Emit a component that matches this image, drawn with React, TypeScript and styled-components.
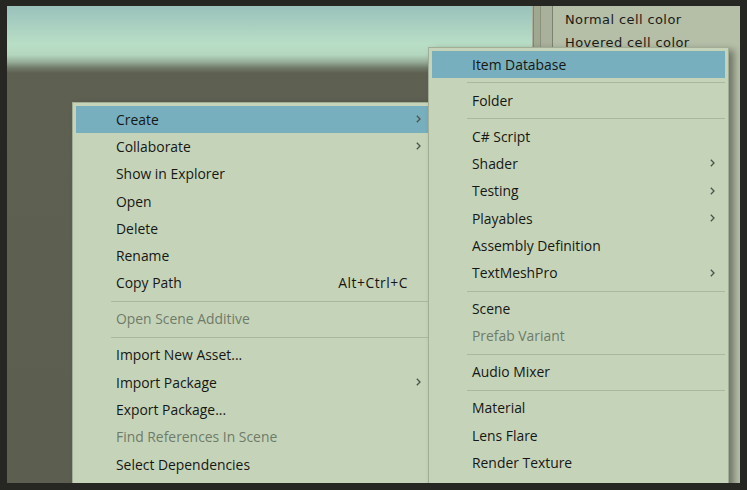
import React from "react";
import styled, { createGlobalStyle } from "styled-components";

const Global = createGlobalStyle`
  html, body { margin: 0; padding: 0; background: #262722; }
  body { width: 747px; height: 490px; overflow: hidden; }
`;

const Frame = styled.div`
  width: 747px;
  height: 490px;
  box-sizing: border-box;
  padding: 6px 7px 7px 7px;
  background: #262722;
`;

const Workspace = styled.div`
  position: relative;
  display: flex;
  height: 100%;
  overflow: hidden;
`;

const SceneView = styled.div`
  flex: 1;
  background: linear-gradient(
    to bottom,
    #9bc2bb 0px,
    #a6cdbf 16px,
    #b9dec6 38px,
    #b3d6be 49px,
    #97ad98 56px,
    #707a69 62px,
    #5e6152 67px,
    #5c5e50 100%
  );
`;

const Splitter = styled.div`
  width: 20px;
  display: flex;
  background: #a9b09b;
`;

const ScrollTrack = styled.div`
  width: 6px;
  margin-left: 1px;
  background: #a0a892;
  border-left: 1px solid #7f8772;
  border-right: 1px solid #8a927c;
`;

const Inspector = styled.div`
  width: 188px;
  border-left: 1px solid #7c8270;
  background: #b5bea7;
  padding-top: 2px;
  box-sizing: border-box;
`;

const FieldRow = styled.div`
  height: 23px;
  display: flex;
  align-items: center;
  padding-left: 12px;
  font-family: "DejaVu Sans", sans-serif;
  font-size: 13px;
  letter-spacing: 0.4px;
  color: #1a1c18;
`;

const Menu = styled.div<{ $left: number; $top: number; $width: number; $z: number }>`
  position: absolute;
  left: ${(p) => p.$left}px;
  top: ${(p) => p.$top}px;
  width: ${(p) => p.$width}px;
  z-index: ${(p) => p.$z};
  box-sizing: border-box;
  border: 1px solid #a2ad95;
  padding: 3px 3px 12px 3px;
  background: #c5d4b9;
  box-shadow: 5px 3px 7px rgba(0, 0, 0, 0.38);
  font-family: "Open Sans", sans-serif;
  font-size: 13.9px;
`;

const Item = styled.div<{ $active?: boolean; $disabled?: boolean }>`
  height: 27.3px;
  box-sizing: border-box;
  padding-bottom: 1px;
  display: flex;
  align-items: center;
  padding-left: 40px;
  background: ${(p) => (p.$active ? "#77afbe" : "transparent")};
  color: ${(p) => (p.$disabled ? "#6f7b69" : "#161714")};
  white-space: nowrap;
`;

const Label = styled.span`
  flex: 1;
`;

const Shortcut = styled.span`
  letter-spacing: 0.5px;
`;

const ArrowCell = styled.span`
  width: 23px;
  display: flex;
  justify-content: flex-end;
  padding-right: 10px;
  box-sizing: border-box;
`;

const Separator = styled.div`
  height: 8.7px;
  display: flex;
  align-items: center;
  padding-left: 35px;
  &::after {
    content: "";
    flex: 1;
    height: 1px;
    background: #aab89e;
  }
`;

const Chevron = () => (
  <svg width="5" height="8" viewBox="0 0 5 8">
    <path d="M0.8 0.8 L4 4 L0.8 7.2" fill="none" stroke="#4d524a" strokeWidth="1.3" />
  </svg>
);

type Entry =
  | { sep: true }
  | { label: string; sub?: boolean; disabled?: boolean; active?: boolean; shortcut?: string };

const leftItems: Entry[] = [
  { label: "Create", sub: true, active: true },
  { label: "Collaborate", sub: true },
  { label: "Show in Explorer" },
  { label: "Open" },
  { label: "Delete" },
  { label: "Rename" },
  { label: "Copy Path", shortcut: "Alt+Ctrl+C" },
  { sep: true },
  { label: "Open Scene Additive", disabled: true },
  { sep: true },
  { label: "Import New Asset..." },
  { label: "Import Package", sub: true },
  { label: "Export Package..." },
  { label: "Find References In Scene", disabled: true },
  { label: "Select Dependencies" },
];

const rightItems: Entry[] = [
  { label: "Item Database", active: true },
  { sep: true },
  { label: "Folder" },
  { sep: true },
  { label: "C# Script" },
  { label: "Shader", sub: true },
  { label: "Testing", sub: true },
  { label: "Playables", sub: true },
  { label: "Assembly Definition" },
  { label: "TextMeshPro", sub: true },
  { sep: true },
  { label: "Scene" },
  { label: "Prefab Variant", disabled: true },
  { sep: true },
  { label: "Audio Mixer" },
  { sep: true },
  { label: "Material" },
  { label: "Lens Flare" },
  { label: "Render Texture" },
];

const MenuList = ({ items }: { items: Entry[] }) => (
  <>
    {items.map((e, i) =>
      "sep" in e ? (
        <Separator key={i} />
      ) : (
        <Item key={i} $active={e.active} $disabled={e.disabled}>
          <Label>{e.label}</Label>
          {e.shortcut && <Shortcut>{e.shortcut}</Shortcut>}
          <ArrowCell>{e.sub && <Chevron />}</ArrowCell>
        </Item>
      )
    )}
  </>
);

export default function App() {
  return (
    <>
      <Global />
      <Frame>
        <Workspace>
          <SceneView />
          <Splitter>
            <ScrollTrack />
          </Splitter>
          <Inspector>
            <FieldRow>Normal cell color</FieldRow>
            <FieldRow>Hovered cell color</FieldRow>
          </Inspector>
          <Menu $left={65} $top={96} $width={363} $z={1}>
            <MenuList items={leftItems} />
          </Menu>
          <Menu $left={421} $top={41} $width={301} $z={2}>
            <MenuList items={rightItems} />
          </Menu>
        </Workspace>
      </Frame>
    </>
  );
}
